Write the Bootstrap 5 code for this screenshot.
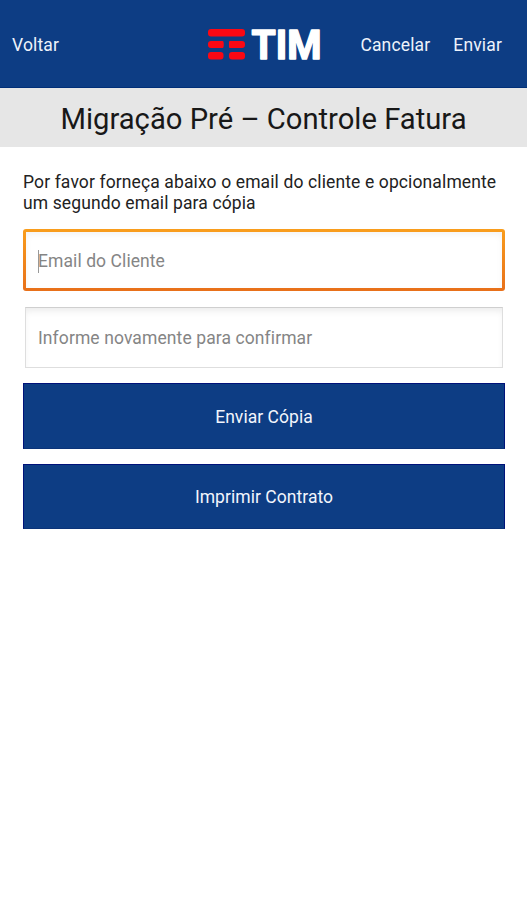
<!DOCTYPE html>
<html lang="pt-BR">
<head>
<meta charset="utf-8">
<meta name="viewport" content="width=device-width, initial-scale=1">
<title>Migração Pré – Controle Fatura</title>
<link href="https://cdn.jsdelivr.net/npm/bootstrap@5.3.0/dist/css/bootstrap.min.css" rel="stylesheet">
<style>
  body { font-family: Roboto, "Liberation Sans", sans-serif; color: #222; background: #fff; font-size: 17.5px; }
  .topbar { height: 88px; background: #0d3d84; border-bottom: 1px solid #002f78; }
  .topbar .side { padding-top: 3px; }
  .topbar a { color: #eef3fb; font-size: 17.5px; letter-spacing: .15px; }
  .side-left { width: 208px; padding-left: 12px; }
  .side-right { padding-right: 25px; gap: 23px; }
  .page-title { height: 59px; background: #e6e6e6; font-size: 29.2px; color: #181818; padding-top: 4px; }
  .page-body { padding: 25px 22px 0 23px; }
  .intro { line-height: 20.5px; margin-bottom: 16px; white-space: nowrap; letter-spacing: .12px; }
  .field { height: 61px; font-size: 17.5px; padding: 0 12px; border-radius: 0; letter-spacing: .1px; }
  .field::placeholder { color: #858585; opacity: 1; }
  .field-ring { height: 62px; padding: 3px; border-radius: 3px; background: linear-gradient(#f99d1c, #e8701a); margin-bottom: 16px; }
  .field-ring .inner { background: #fff; box-shadow: inset 0 3px 6px #f3f3f3; padding: 2px 0 0 12px; color: #858585; letter-spacing: .08px; }
  .caret { width: 1px; height: 23px; background: #999; margin-right: -1px; }
  .field-plain { width: 478px; margin: 0 0 15px 2px; border: 1px solid #dedede; border-top-color: #cfcfcf; box-shadow: inset 0 5px 7px -2px #ececec; }
  .actions { gap: 15px; }
  .action { height: 65.5px; background: #0d3d84; border: 1px solid #00127a; border-bottom-color: #0b3479; color: #f2f5fc; font-size: 17.5px; border-radius: 0; letter-spacing: .05px; padding-top: 8px; }
  .action:hover { background: #0b3574; color: #fff; }
</style>
</head>
<body>
<header class="topbar d-flex align-items-center">
  <div class="side side-left flex-shrink-0"><a href="#" class="text-decoration-none">Voltar</a></div>
  <svg class="flex-shrink-0" width="118" height="60" viewBox="0 -12 118 60" role="img" aria-label="TIM">
    <g fill="#fb0814">
      <rect x="0" y="3" width="37" height="7.5" rx="3"/>
      <rect x="0" y="15" width="15.5" height="7" rx="3"/><rect x="11" y="15" width="4.5" height="7" rx="1"/>
      <rect x="21" y="15" width="16" height="7" rx="3"/><rect x="21" y="15" width="4.5" height="7" rx="1"/>
      <rect x="0" y="26" width="15.5" height="7.5" rx="3"/>
      <rect x="21" y="26" width="16" height="7.5" rx="3"/>
    </g>
    <text x="43.5" y="32.6" textLength="70" lengthAdjust="spacingAndGlyphs" font-family="Roboto, sans-serif" font-weight="700" font-size="40.5" fill="#fff" stroke="#fff" stroke-width="1.5" stroke-linejoin="round">TIM</text>
  </svg>
  <nav class="side side-right d-flex justify-content-end flex-grow-1"><a href="#" class="text-decoration-none">Cancelar</a><a href="#" class="text-decoration-none">Enviar</a></nav>
</header>
<h1 class="page-title d-flex align-items-center justify-content-center fw-normal mb-0">Migração Pré – Controle Fatura</h1>
<main class="page-body">
  <p class="intro">Por favor forneça abaixo o email do cliente e opcionalmente<br>um segundo email para cópia</p>
  <div class="field-ring"><div class="inner h-100 d-flex align-items-center"><span class="caret"></span><span>Email do Cliente</span></div></div>
  <input type="email" class="form-control field field-plain" placeholder="Informe novamente para confirmar">
  <div class="d-grid actions">
    <button type="button" class="btn action">Enviar Cópia</button>
    <button type="button" class="btn action">Imprimir Contrato</button>
  </div>
</main>
<script src="https://cdn.jsdelivr.net/npm/bootstrap@5.3.0/dist/js/bootstrap.bundle.min.js"></script>
</body>
</html>
